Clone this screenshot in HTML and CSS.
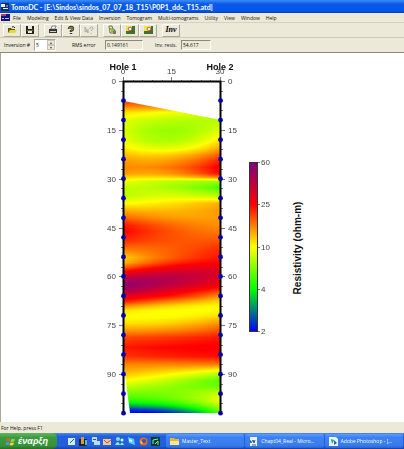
FILE: index.html
```html
<!DOCTYPE html>
<html lang="en">
<head>
<meta charset="utf-8">
<title>TomoDC</title>
<link rel="stylesheet" href="styles.css">
</head>
<body>
<header class="titlebar">
  <svg class="app-icon" viewBox="0 0 9 9"><path fill="#183050" d="M1 1h8v8H1z"/><path fill="#e8f0f8" d="M1 2h4v3H1zM3 6h5v1H3z"/><path fill="#58a" d="M6 3h2v2H6z"/></svg>
  <h1>TomoDC - [E:\Sindos\sindos_07_07_18_T15\P0P1_ddc_T15.atd]</h1>
</header>
<nav class="menu">
  <svg class="app-icon" viewBox="0 0 9 9"><path fill="#10108c" d="M0 1h9v7H0z"/><path fill="#c23a5a" d="M0 1h5v2H0z"/><path fill="#bcd" d="M1 5h2v1H1zM4 5h4v1H4z"/></svg>
  <button>File</button><button>Modeling</button><button>Edit &amp; View Data</button><button>Inversion</button><button>Tomogram</button><button>Multi-tomograms</button><button>Utility</button><button>View</button><button>Window</button><button>Help</button>
</nav>
<div class="toolbar">
  <div class="group">
    <button aria-label="Open"><svg viewBox="0 0 10 10"><path fill="#5c5a10" d="M1 3h3l1 1h3v4H1z"/><path fill="#e8d840" d="M3 5h7L8 8H1z"/><path fill="none" stroke="#222" d="M5 2q2-1 3 1"/></svg></button>
    <button aria-label="Save"><svg viewBox="0 0 10 10"><path fill="#222" d="M1 1h8v8H1z"/><path fill="#e8e8dc" d="M3 1h4v3H3zM3 6h4v2H3z"/><path fill="#7c7c20" d="M2 5h6v1H2z"/></svg></button>
  </div>
  <div class="group">
    <button aria-label="Print"><svg viewBox="0 0 10 10"><path fill="#333" d="M1 4h8v4H1z"/><path fill="#fff" stroke="#555" stroke-width=".7" d="M3 4l1-3h4L7 4z"/><path fill="#ccc" d="M2 6h6v1H2z"/></svg></button>
    <button aria-label="About"><svg viewBox="0 0 10 10"><path fill="none" stroke="#333" stroke-width="2.400" d="M3 4q0-2 2-2t2 2q0 1-2 2v1M5 8v1"/><path fill="none" stroke="#b8a820" stroke-width=".8" d="M3 4q0-2 2-2t2 2q0 1-2 2"/></svg></button>
    <button aria-label="Context help"><svg viewBox="0 0 10 10"><path fill="none" stroke="#aaa89c" d="M1 2l3 6V4M1 2v5l2-1M6 4q0-2 1.500-2T9 3q0 1-2 3M7 8v1"/></svg></button>
  </div>
  <div class="group">
    <button aria-label="Edit data"><svg viewBox="0 0 10 10"><path fill="#f4ef70" stroke="#444" stroke-width=".7" d="M2 1h3l1 3 2 1v3H3z"/><path stroke="#284" d="M3 4h3M4 6h4"/><path fill="#776" d="M6 6h3v3H6z"/></svg></button>
    <button aria-label="Zoom in"><svg viewBox="0 0 10 10"><path fill="#397534" d="M1 1h9v8H1z"/><path fill="#f5e345" d="M1 1h6v5H1z"/><circle cx="5" cy="4" r="1.800" fill="#fff" stroke="#a43" stroke-width=".8"/><path stroke="#a32" d="M6 5l3 3"/></svg></button>
    <button aria-label="Zoom out"><svg viewBox="0 0 10 10"><path fill="#397534" d="M1 1h9v8H1z"/><path fill="#f5e345" d="M1 1h7v5H1z"/><circle cx="6" cy="4" r="1.800" fill="#fff" stroke="#c33" stroke-width=".8"/><path stroke="#a32" d="M7 5l2 3"/></svg></button>
  </div>
  <div class="group"><button class="inv">Inv</button></div>
</div>
<form class="fields">
  <label for="num">Inversion #</label>
  <span class="spin"><input id="num" value="5"><span class="arrows"><button type="button" aria-label="Up"></button><button type="button" aria-label="Down"></button></span></span>
  <label class="rms" for="rms">RMS error</label><input id="rms" class="value" value="0.149161" readonly>
  <label class="res" for="res">Inv. resis.</label><input id="res" class="value short" value="54.617" readonly>
</form>
<main class="client">
  <svg class="plot" viewBox="0 53 404 369" role="img" aria-label="Resistivity tomogram">
    <defs>
      <linearGradient id="scale" x2="0" y2="1"><stop stop-color="#800080"/><stop offset=".25" stop-color="red"/><stop offset=".5" stop-color="#ff0"/><stop offset=".75" stop-color="#0f0"/><stop offset="1" stop-color="#00f"/></linearGradient>
    </defs>
    <foreignObject x="124" y="82" width="97" height="331"><canvas id="field" class="field" width="97" height="331"></canvas></foreignObject>
    <g id="axes"></g>
    <path class="frame" d="M123.500 413V81.500H220.500V413"/>
    <g id="electrodes"></g>
    <text class="hole" x="123" y="70">Hole 1</text>
    <text class="hole" x="220" y="70">Hole 2</text>
    <rect class="bar" x="249.500" y="162.500" width="8" height="169" fill="url(#scale)"/>
    <g id="legend"></g>
    <text class="caption" transform="translate(301 248) rotate(-90)">Resistivity (ohm-m)</text>
  </svg>
</main>
<footer class="status">For Help, press F1</footer>
<div class="taskbar">
  <button class="start"><svg viewBox="0 0 10 10"><path fill="#f05a28" d="M1 2q2-1 4 0L4 5Q2 4 0 5z"/><path fill="#8cd850" d="M6 2q2 1 4 0L9 5Q7 6 5 5z"/><path fill="#4a9cf0" d="M0 6q2-1 4 0L3 9Q1 8 0 9z"/><path fill="#ffd23c" d="M5 6q2 1 4 0L8 9Q6 10 4 9z"/></svg>έναρξη</button>
  <div class="quick">
    <button aria-label="Desktop"><svg viewBox="0 0 9 9"><path fill="#cfe8fb" d="M1 1h7v7H1z"/><path stroke="#268" d="M3 6l4-4"/></svg></button>
    <button aria-label="Books"><svg viewBox="0 0 9 9"><path fill="#222" d="M0 2h8v7H0z"/><path fill="#d49a4a" d="M2 0h3v7H2z"/><path fill="#5bc" d="M6 3h2v5H6z"/></svg></button>
    <button aria-label="Explorer"><svg viewBox="0 0 9 9"><path fill="#b7dcf7" d="M1 0h5v4h3v4H3V5H1z"/><path fill="#357" d="M2 2h3v1H2z"/></svg></button>
    <button aria-label="Mail"><svg viewBox="0 0 9 9"><path fill="#f1c890" d="M0 2h8v6H0z"/><path fill="none" stroke="#b54" d="M1 3l3 3 4-3"/></svg></button>
    <button aria-label="Messenger"><svg viewBox="0 0 9 9"><circle cx="3" cy="2" r="2" fill="#7de0d8"/><circle cx="7" cy="3" r="1.500" fill="#cfe"/><path fill="#9be8c8" d="M0 8q3-6 5 0zM5 8q2-5 4 0z"/></svg></button>
    <button aria-label="Network"><svg viewBox="0 0 9 9"><path fill="#52d1f1" d="M1 0l6 2 1 6-6-2z"/><path fill="#e6fbff" d="M2 2l3 1v2L2 4z"/></svg></button>
    <button aria-label="Browser"><svg viewBox="0 0 9 9"><circle cx="4.500" cy="4.500" r="4" fill="#e36b22"/><circle cx="5" cy="4" r="2" fill="#315aa0"/><path fill="#ffd060" d="M1 3l3 3-2 1z"/></svg></button>
    <button aria-label="Editor"><svg viewBox="0 0 9 9"><path fill="#063c38" d="M0 0h9v9H0z"/><path fill="none" stroke="#7ff0a0" d="M2 7V3l5-1M4 7l3-3v4"/></svg></button>
  </div>
  <button class="task"><svg viewBox="0 0 9 9"><path fill="#e8b838" d="M0 1h4l1 1h4v6H0z"/><path fill="#ffe88a" d="M0 4h9v4H0z"/></svg>Master_Text</button>
  <button class="task"><svg viewBox="0 0 9 9"><path fill="#eef4ff" d="M1 0h7v9H1z"/><path fill="none" stroke="#28539c" d="M1 3l1 3 2-3 1 3 1-3M3 8h4"/></svg>Chapt04_Real - Micro...</button>
  <button class="task"><svg viewBox="0 0 9 9"><path fill="#e9f7ff" d="M0 0h7l2 2v7H0z"/><path fill="#25a060" d="M2 2l3 1-2 4z"/><path fill="#2060b0" d="M5 3l3 3-3 2z"/></svg>Adobe Photoshop - [...</button>
</div>
<script src="plot.js"></script>
</body>
</html>
```
FILE: styles.css
```css
* { box-sizing: border-box; }
body { margin: 0; min-height: 100vh; display: flex; flex-direction: column; background: #ece9d8; color: #111; font: 5px/8px "Open Sans", "Liberation Sans", sans-serif; }
button, input { margin: 0; padding: 0; border: 0; background: none; color: inherit; font: inherit; }
button { display: flex; align-items: center; white-space: nowrap; }
svg { flex: none; }
.app-icon { width: 9px; height: 9px; }
.titlebar { display: flex; align-items: center; gap: 2px; height: 13px; background: linear-gradient(#3c8cf4, #0a5ae8 30%, #0458ea 80%, #0340c0); color: #fff; }
h1 { margin: 0; font: bold 7px/10px Lato, "Liberation Sans", sans-serif; white-space: nowrap; }
.menu { display: flex; align-items: center; gap: 6px; height: 10px; padding-left: 1px; border-bottom: 1px solid #d5d1c0; }
.menu svg { margin-right: -3px; }
.toolbar { display: flex; align-items: center; gap: 5px; height: 15px; padding-left: 3px; border-bottom: 1px solid #d0ccbc; }
.group { display: flex; }
.group button { justify-content: center; width: 18px; height: 13px; border: 1px solid; border-color: #fff #aca899 #aca899 #fff; }
.group svg { width: 10px; height: 10px; }
.group .inv { font: italic bold 8px/10px "Liberation Serif", serif; color: #000; }
.fields { display: flex; align-items: center; height: 14px; padding-left: 4px; }
.fields label { white-space: nowrap; }
.fields label:first-child { width: 30px; }
.spin { display: flex; padding-left: 1px; background: #fff; border: 1px solid; border-color: #aca899 #fff #fff #aca899; }
.spin input { width: 11px; height: 9px; }
.arrows { display: flex; flex-direction: column; }
.arrows button { width: 8px; height: 5px; background: #ece9d8; border: 1px solid #c8c4b4; justify-content: center; }
.arrows button::before { content: ""; border: solid transparent; border-width: 0 1px 2px; border-bottom-color: #444; }
.arrows button:last-child::before { border-width: 2px 1px 0; border-top-color: #444; }
.rms { width: 33px; margin-left: 16px; }
.res { width: 26px; margin-left: 12px; }
.value { width: 38px; height: 10px; padding-left: 1px; border: 1px solid; border-color: #8c897c #fff #fff #8c897c; }
.value.short { width: 30px; }
.client { flex: 1; background: #fff; border-top: 1px solid #8c897c; box-shadow: inset 1px 0 #aca899; }
.plot { display: block; width: 100%; height: auto; font: 8px "Liberation Sans", Arial, sans-serif; }
.plot text { fill: #444; }
.field { display: block; clip-path: polygon(0 19px, 100% 38px, 100% 100%, 6px 100%, 1px 293px, 0 280px); }
.frame { fill: none; stroke: #000; stroke-width: 2; }
.tick { stroke: #777; }
.dot { fill: #0000b0; }
.plot .hole { font-size: 9px; font-weight: bold; text-anchor: middle; fill: #111; }
.center { text-anchor: middle; }
.end { text-anchor: end; }
.bar { stroke: #333; }
.plot .caption { font-size: 10px; font-weight: bold; text-anchor: middle; fill: #111; }
.status { height: 11px; padding: 2px 1px 0; }
.taskbar { display: flex; height: 16px; background: linear-gradient(#4a8cf4, #245edb 20%, #2360dc 80%, #1941a5); color: #fff; }
.start { gap: 3px; width: 57px; padding-left: 6px; background: linear-gradient(#62b462, #3c9a3c 30%, #389238 80%, #266e26); border-radius: 0 5px 5px 0; font: italic bold 9px/14px "Liberation Sans", Arial, sans-serif; }
.start svg { width: 9px; height: 9px; }
.quick { display: flex; align-items: center; gap: 3px; width: 109px; padding-left: 10px; }
.quick svg, .task svg { width: 9px; height: 9px; }
.task { flex: 1; gap: 3px; min-width: 0; margin: 1px 1px 1px 0; padding-left: 4px; overflow: hidden; border-radius: 2px; background: linear-gradient(#5c9cfb, #3c81f3 25%, #3a7cee 80%, #2a64d0); }
```
FILE: plot.js
```js
// Each row: vertical position, then log-scaled resistivity (0 to 1) at the left hole, midway and right hole.
const rows = [
  [82,.78,.64,.6],[101,.69,.62,.5],[105,.64,.6,.5],[108,.59,.57,.5],[112,.53,.49,.46],[120,.47,.43,.43],[130,.46,.4,.47],
  [140,.48,.42,.53],[148,.52,.48,.59],[155,.57,.56,.67],[160,.6,.6,.72],[167,.62,.64,.77],[173,.6,.61,.75],
  [177,.54,.54,.62],[181,.48,.43,.4],[187,.44,.41,.32],[195,.43,.46,.42],[203,.5,.53,.58],[210,.58,.57,.6],
  [217,.65,.6,.6],[225,.73,.65,.61],[231,.75,.67,.63],[240,.71,.67,.67],[248,.64,.66,.71],[257,.55,.66,.73],
  [262,.57,.7,.75],[267,.66,.77,.79],[272,.77,.84,.82],[277,.88,.89,.81],[284,.97,.88,.77],[290,.92,.8,.7],
  [296,.8,.72,.6],[301,.72,.62,.54],[306,.6,.53,.5],[310,.53,.5,.5],[316,.5,.5,.54],[323,.53,.55,.61],
  [330,.6,.62,.67],[337,.68,.7,.73],[347,.73,.75,.76],[356,.7,.72,.74],[364,.62,.62,.63],[372,.57,.52,.45],
  [380,.5,.43,.33],[386,.44,.39,.35],[392,.38,.38,.44],[398,.32,.36,.48],[402,.25,.31,.47],[406,.15,.22,.42],
  [409,.05,.13,.38],[413,0,.03,.33]
];
const colors = [[0,0,255],[0,255,0],[255,255,0],[255,0,0],[128,0,128]];
const canvas = document.getElementById("field");
const ctx = canvas.getContext("2d");
const image = ctx.createImageData(canvas.width, canvas.height);
for (let y = 0, r = 0; y < canvas.height; y++) {
  while (r < rows.length - 2 && rows[r + 1][0] <= y + 82) r++;
  const a = rows[r], b = rows[r + 1], f = (y + 82 - a[0]) / (b[0] - a[0]);
  const [left, mid, right] = [1, 2, 3].map(i => a[i] + (b[i] - a[i]) * f);
  for (let x = 0; x < canvas.width; x++) {
    const u = x / (canvas.width - 1);
    const v = left * (1 - u) * (1 - 2 * u) + mid * 4 * u * (1 - u) + right * u * (2 * u - 1);
    const t = Math.max(0, Math.min(0.9999, v)) * 4, k = Math.floor(t);
    const at = 4 * (y * canvas.width + x);
    for (let c = 0; c < 3; c++) image.data[at + c] = colors[k][c] + (colors[k + 1][c] - colors[k][c]) * (t - k);
    image.data[at + 3] = 255;
  }
}
ctx.putImageData(image, 0, 0);

function add(parent, name, attrs, text) {
  const node = document.createElementNS("http://www.w3.org/2000/svg", name);
  for (const key in attrs) node.setAttribute(key, attrs[key]);
  if (text !== undefined) node.textContent = text;
  document.getElementById(parent).append(node);
}
for (let depth = 0; depth <= 100; depth += 3) {
  const y = Math.round(81 + depth * 3.257) + 0.5, size = depth % 15 ? 2 : 4;
  add("axes", "path", { class: "tick", d: `M${123 - size} ${y}h${size}M221 ${y}h${size}` });
  if (depth % 15 === 0) {
    add("axes", "text", { class: "end", x: 116, y: y + 2.5 }, depth);
    add("axes", "text", { x: 228, y: y + 2.5 }, depth);
  }
}
for (let x = 0; x <= 30; x += 3) {
  const size = x % 15 ? 1 : 4;
  add("axes", "path", { class: "tick", d: `M${Math.round(123 + x * 3.233) + 0.5} ${81 - size}v${size}` });
  if (x % 15 === 0) add("axes", "text", { class: "center", x: 123 + x * 3.233, y: 74 }, x);
}
for (let depth = 6; depth <= 102; depth += 6) {
  for (const x of [123.5, 220.5]) add("electrodes", "circle", { class: "dot", cx: x, cy: 81 + depth * 3.257, r: 2.4 });
}
[60, 25, 10, 4, 2].forEach((value, i) => {
  const y = Math.round(162 + i * 42.25) + 0.5;
  add("legend", "path", { class: "tick", d: `M258 ${y}h2` });
  add("legend", "text", { x: 261, y: y + 2.5 }, value);
});
```
